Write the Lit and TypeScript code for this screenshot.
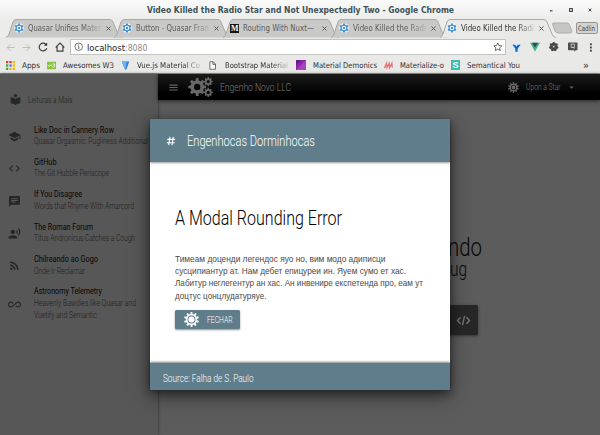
import { LitElement, html, svg, css } from "lit";
import { customElement } from "lit/decorators.js";

/** One line of text fitted to a given width; capitals are centred in the height. */
const line = (text: string, width: number, size: number, height: number, cls = "") => html`
  <svg class="line ${cls}" width=${width} height=${height}>
    <text y=${height / 2 + size * 0.36} font-size=${size} textLength=${width} lengthAdjust="spacingAndGlyphs">${text}</text>
  </svg>`;

const icon = (body: unknown, size: number, cls = "", box = "0 0 24 24") => html`
  <svg class="icon ${cls}" width=${size} height=${size} viewBox=${box}>${body}</svg>`;

/** Outline of a cog wheel with a round hole. */
function cog(cx: number, cy: number, r: number, root: number, teeth: number, hole: number) {
  const step = (Math.PI * 2) / teeth;
  const pts: string[] = [];
  for (let i = 0; i < teeth; i++) {
    for (const [rad, off] of [[root, -0.3], [r, -0.19], [r, 0.19], [root, 0.3]]) {
      const a = (i + off) * step - Math.PI / 2;
      pts.push(`${(cx + rad * Math.cos(a)).toFixed(2)} ${(cy + rad * Math.sin(a)).toFixed(2)}`);
    }
  }
  return `M${pts.join("L")}ZM${cx - hole} ${cy}a${hole} ${hole} 0 1 0 ${hole * 2} 0a${hole} ${hole} 0 1 0 ${-hole * 2} 0Z`;
}

const quasar = () => icon(svg`
  <circle cx="12" cy="12" r="11.5" fill="#f3f8fc"/>
  <path fill-rule="evenodd" fill="#3f8fd6" d=${cog(12, 12, 11, 8.5, 6, 5.5)}/>
  <circle cx="12" cy="12" r="2.6" fill="#1976d2"/>`, 10);
const medium = () => html`<span class="medium">M</span>`;

const tabs = [
  { icon: quasar, title: "Quasar Unifies Mater", width: 73, fade: true },
  { icon: quasar, title: "Button - Quasar Fran", width: 73, fade: true },
  { icon: medium, title: "Routing With Nuxt—", width: 71, fade: false },
  { icon: quasar, title: "Video Killed the Radi", width: 73, fade: true },
  { icon: quasar, title: "Video Killed the Radi", width: 73, fade: true, active: true },
];

const appsIcon = icon(svg`${["#e53935", "#e53935", "#f4b400", "#43a047", "#3f7de0", "#f4b400", "#43a047", "#f4b400", "#f4b400"].map(
  (c, i) => svg`<rect x=${(i % 3) * 9} y=${Math.floor(i / 3) * 9} width="6" height="6" fill=${c}/>`)}`, 9);

const bookmarks = [
  { gap: 6, icon: appsIcon, space: 7, text: "Apps", width: 18 },
  { gap: 7, icon: icon(svg`<rect y="2" width="24" height="20" fill="#86c440"/><path d="M2 10l4 5 4-5 4 5M15 8h6l-3 4c5 0 4 6-3 4" fill="none" stroke="#fff" stroke-width="2"/>`, 9), space: 7, text: "Awesomes W3", width: 51 },
  { gap: 7, icon: icon(svg`<path d="M2 1h20L14 23h-3z" fill="#2f7fd6"/><path d="M2 1h13l-3 22z" fill="#6bb3f2"/>`, 9), space: 7, text: "Vue.js Material Co", width: 63, fade: true },
  { gap: 8, icon: icon(svg`<path d="M5 2h9l6 6v14H5zM13 2v7h7" fill="#fff" stroke="#555" stroke-width="2.2"/>`, 9), space: 8, text: "Bootstrap Material", width: 63, fade: true },
  { gap: 8, icon: icon(svg`<rect width="24" height="24" fill="#8e24aa"/><path d="M0 24L24 0v24z" fill="#a744bd"/><path d="M0 0h14L0 14z" fill="#6d1b94"/>`, 10), space: 7, text: "Material Demonics", width: 64 },
  { gap: 7, icon: icon(svg`<path d="M1 19L7 6l1 12 6-12 1 12 6-12 1 12" fill="none" stroke="#ee6e73" stroke-width="3.4"/>`, 9), space: 7, text: "Materialize-o", width: 44 },
  { gap: 7, icon: html`<span class="semantic">S</span>`, space: 7, text: "Semantical You", width: 53 },
];

const menu = [
  { title: "Like Doc in Cannery Row", width: 80, sub: [["Quasar Orgasmic: Pugliness Additional", 114]], icon: svg`<path d="M5 13.18v4L12 21l7-3.82v-4L12 17l-7-3.82zM12 3L1 9l11 6 9-4.91V17h2V9L12 3z"/>` },
  { title: "GitHub", width: 22.5, sub: [["The Git Hubble Periscope", 75]], icon: svg`<path d="M9.4 16.6L4.8 12l4.6-4.6L8 6l-6 6 6 6 1.4-1.4zm5.2 0l4.6-4.6-4.6-4.6L16 6l6 6-6 6-1.4-1.4z"/>` },
  { title: "If You Disagree", width: 48, sub: [["Words that Rhyme With Amarcord", 100]], icon: svg`<path d="M20 2H4c-1.1 0-1.99.9-1.99 2L2 22l4-4h14c1.1 0 2-.9 2-2V4c0-1.1-.9-2-2-2zM6 9h12v2H6V9zm8 5H6v-2h8v2zm4-6H6V6h12v2z"/>` },
  { title: "The Roman Forum", width: 59, sub: [["Titus Andronicus Catches a Cough", 101]], icon: svg`<circle cx="9" cy="9" r="4"/><path d="M9 15c-2.67 0-8 1.34-8 4v2h16v-2c0-2.66-5.33-4-8-4zm7.76-9.64l-1.68 1.69c.84 1.18.84 2.71 0 3.89l1.68 1.69c2.02-2.02 2.02-5.07 0-7.27zM20.07 2l-1.63 1.63c2.77 3.02 2.77 7.56 0 10.74L20.07 16c3.9-3.89 3.91-9.95 0-14z"/>` },
  { title: "Chilreando ao Gogo", width: 64, sub: [["Onde Ir Reclamar", 51]], icon: svg`<circle cx="6.18" cy="17.82" r="2.18"/><path d="M4 4.44v2.83c7.03 0 12.73 5.7 12.73 12.73h2.83c0-8.59-6.97-15.56-15.56-15.56zm0 5.66v2.83c3.9 0 7.07 3.17 7.07 7.07h2.83c0-5.47-4.43-9.9-9.9-9.9z"/>` },
  { title: "Astronomy Telemetry", width: 68, sub: [["Heavenly Bawdies like Quasar and", 102], ["Vuetify and Semantic", 63]], icon: svg`<path d="M18.6 6.62c-1.44 0-2.8.56-3.77 1.53L12 10.66 10.48 12h.01L7.8 14.39c-.64.64-1.49.99-2.4.99-1.87 0-3.39-1.51-3.39-3.38S3.53 8.62 5.4 8.62c.91 0 1.76.35 2.44 1.03l1.13 1 1.51-1.34L9.22 8.2C8.2 7.18 6.84 6.62 5.4 6.62 2.42 6.62 0 9.04 0 12s2.42 5.38 5.4 5.38c1.44 0 2.8-.56 3.77-1.53l2.83-2.5.01.01L13.52 12h-.01l2.69-2.39c.64-.64 1.49-.99 2.4-.99 1.87 0 3.39 1.51 3.39 3.38s-1.52 3.38-3.39 3.38c-.9 0-1.76-.35-2.44-1.03l-1.14-1.01-1.51 1.34 1.27 1.12c1.02 1.01 2.37 1.57 3.82 1.57 2.98 0 5.4-2.41 5.4-5.38s-2.42-5.37-5.4-5.37z"/>` },
] as const;

@customElement("browser-chrome")
class BrowserChrome extends LitElement {
  static styles = css`
    :host { display: block; height: 74px; background: #e9e9e7; box-sizing: border-box; border-bottom: 1.5px solid #8f8f8c; font-family: "DejaVu Sans", sans-serif; font-weight: 400; }
    svg { display: block; flex: none; overflow: visible; }
    .row { display: flex; align-items: center; }
    .title { height: 19px; background: linear-gradient(#fbfbfb, #ececeb); padding-left: 147px; }
    .title .line { font-weight: bold; fill: #40525a; }
    .win { display: flex; align-items: center; justify-content: space-between; width: 42px; margin-left: 95.5px; color: #333; }
    .win .icon { fill: none; stroke: #3a464c; }
    .tabs { height: 18px; background: #ececeb; padding-left: 6px; position: relative; }
    .tab { position: relative; width: 108.4px; height: 18px; display: flex; align-items: center; flex: none; }
    .tab.active { z-index: 1; width: 112px; }
    .shape { position: absolute; left: 0; top: 0; fill: #c9c9c7; stroke: #a9a9a6; }
    .active .shape { fill: #e9e9e7; }
    .inner { position: relative; display: flex; align-items: center; padding-left: 7.5px; gap: 4px; width: 100%; }
    .inner .line { fill: #5c5c5c; }
    .active .inner .line { fill: #333; }
    .fade { -webkit-mask-image: linear-gradient(90deg, #000 75%, transparent 105%); mask-image: linear-gradient(90deg, #000 75%, transparent 105%); }
    .close { margin-left: auto; margin-right: 3.5px; stroke: #555; stroke-width: 3.2; fill: none; }
    .active .close { margin-right: 8.5px; }
    .medium { background: #151515; color: #fff; width: 9px; height: 9px; font: bold 8px/9px "Liberation Serif", serif; text-align: center; }
    .new { fill: #c6c6c4; stroke: #adadaa; }
    .user { margin-left: 4px; width: 20px; height: 10px; border: 1px solid #979795; border-radius: 2px; background: #d3d3d1; display: flex; align-items: center; justify-content: center; }
    .user .line { fill: #444; }
    .tools { height: 20px; padding-left: 6px; }
    .tools > .nav { margin-right: 7px; fill: none; stroke: #3e3e3e; stroke-width: 2.8; }
    .tools > .dim { stroke: #bdbdbb; stroke-width: 2.6; }
    .url { width: 436px; height: 16px; margin-left: -2px; box-sizing: border-box; border: 1px solid #c2c2bf; background: #fff; display: flex; align-items: center; padding: 0 3px 0 3px; }
    .url .host { fill: #222; margin-left: 3px; }
    .url .port { fill: #8a8a8a; margin-left: .5px; }
    .star { margin-left: auto; }
    .ext { display: flex; align-items: center; gap: 9px; margin-left: 6px; }
    .marks { height: 16px; }
    .mark { display: flex; align-items: center; }
    .mark .line { fill: #303030; }
    .semantic { background: #35bdb2; color: #fff; width: 9px; height: 10px; font: bold 9px/10px "Liberation Sans", sans-serif; text-align: center; }
    .more { margin-left: 63px; fill: #333; }
  `;
  render() {
    return html`
      <div class="row title">
        ${line("Video Killed the Radio Star and Not Unexpectedly Two - Google Chrome", 307, 8, 18)}
        <div class="win">
          ${icon(svg`<path d="M0 2.8h2.5" stroke-width="1.2"/>`, 4, "", "0 0 4 4")}
          ${icon(svg`<rect x=".6" y=".6" width="2.8" height="2.8" stroke-width="1.1"/>`, 4, "", "0 0 4 4")}
          ${icon(svg`<path d="M.6 .6l2.8 2.8M3.4 .6L.6 3.4" stroke-width="1"/>`, 4, "", "0 0 4 4")}
        </div>
      </div>
      <div class="row tabs">
        ${tabs.map((t) => html`
          <div class="tab ${t.active ? "active" : ""}">
            <svg class="shape" width="118" height="18"><path d="M0 18.5Q2 18 3 15L7 3Q8 .5 10 .5H104Q106 .5 107 3L112 15Q113 18 116 18.5"/></svg>
            <div class="inner">
              ${t.icon()}
              ${line(t.title, t.width, 8, 18, t.fade ? "fade" : "")}
              ${icon(svg`<path d="M5 5l14 14M19 5L5 19"/>`, 7, "close")}
            </div>
          </div>`)}
        <svg class="new" width="20" height="12"><path d="M1 1h14q2 0 2.5 2l2.5 6q0 2-2 2H6q-2 0-3-2L.5 2z"/></svg>
        <div class="user">${line("Cadlin", 17, 7.5, 10)}</div>
      </div>
      <div class="row tools">
        ${icon(svg`<path d="M23 12H3M12 3l-9 9 9 9"/>`, 9, "nav dim")}
        ${icon(svg`<path d="M1 12h20M12 3l9 9-9 9"/>`, 9, "nav dim")}
        ${icon(svg`<path d="M20 7A9.3 9.3 0 1 0 21 15"/><path d="M14 9h8V1z" fill="#3e3e3e" stroke="none"/>`, 10, "nav")}
        ${icon(svg`<path d="M1.5 13L12 2.5 22.5 13M5 11v11h14V11"/>`, 10, "nav")}
        <div class="url">
          ${icon(svg`<circle cx="12" cy="12" r="9.5" fill="none" stroke="#555" stroke-width="2"/><path d="M12 10.5v7M12 6v2.5" stroke="#555" stroke-width="2.4"/>`, 9.5)}
          ${line("localhost", 38, 9.3, 13, "host")}${line(":8080", 22.5, 9.3, 13, "port")}
          ${icon(svg`<path d="M12 2.5l3 6.5 7 .8-5.2 4.8 1.4 7L12 18l-6.2 3.6 1.4-7L2 9.8 9 9z" fill="none" stroke="#444" stroke-width="2"/>`, 9.5, "star")}
        </div>
        <div class="ext">
          ${icon(svg`<circle cx="12" cy="12" r="12" fill="#dce9f5"/><path d="M1 4l8 1 3 5 3-5 8-1-8 11v8H9v-8z" fill="#1565c0"/>`, 9)}
          ${icon(svg`<path d="M0 2h24L12 23z" fill="#41b883"/><path d="M5 2h14l-7 12z" fill="#35495e"/>`, 10)}
          ${icon(svg`<path d=${cog(12, 12, 12, 10, 7, 2)} fill="#444" fill-rule="evenodd"/><path d="M4 9l16 0M6 17l4-4M18 17l-4-4" stroke="#777" stroke-width="1.5"/>`, 9.5)}
          ${icon(svg`<rect y="1" width="24" height="20" rx="2" fill="#4c4c4c"/><path d="M15 21h5l-3 3z" fill="#4c4c4c"/><path d="M8 5h8v9H8zM12 12l4 5" fill="none" stroke="#ddd" stroke-width="2"/>`, 9.5)}
          ${icon(svg`<g fill="#444"><rect x="10.5" y="1" width="5" height="5"/><rect x="10.5" y="9.5" width="5" height="5"/><rect x="10.5" y="18" width="5" height="5"/></g>`, 9)}
        </div>
      </div>
      <div class="row marks">
        ${bookmarks.map((b) => html`
          <div class="mark" style="gap:${b.space}px;margin-left:${b.gap}px">
            ${b.icon}${line(b.text, b.width, 7.8, 16, b.fade ? "fade" : "")}
          </div>`)}
        ${line("»", 6, 10, 14, "more")}
      </div>`;
  }
}

@customElement("app-root")
class AppRoot extends LitElement {
  static styles = css`
    :host { display: block; position: relative; width: 600px; height: 435px; overflow: hidden; font-family: Roboto, "Liberation Sans", sans-serif; font-weight: 300; }
    svg { display: block; flex: none; overflow: visible; }
    .page { display: flex; height: 361px; background: #5c5c5c; }
    .side { width: 158px; background: #575757; box-shadow: 0 0 3px rgba(0, 0, 0, .55); }
    .brand { display: flex; align-items: center; gap: 6px; height: 51px; padding-left: 9px; }
    .brand .icon, .item .icon { fill: #262626; }
    .item .icon { margin-top: 3px; }
    .brand .line, .sub { fill: #202020; }
    .item { display: flex; align-items: center; gap: 13px; padding-left: 8px; margin-bottom: 7.4px; }
    .texts { display: flex; flex-direction: column; }
    .name { fill: #060606; font-weight: 400; }
    .list { margin-top: -2.5px; }
    .main { flex: 1; }
    .bar { display: flex; align-items: center; height: 26px; background: linear-gradient(#1b1b1b, #000 75%); box-shadow: 0 1px 4px rgba(0, 0, 0, .6); padding-left: 11px; }
    .bar .icon, .gears { fill: #676767; }
    .gears { margin-left: 10px; }
    .bar .line { fill: #7c7c7c; }
    .org { margin-left: 7px; }
    .sun { margin-left: 217px; }
    .star { margin-left: 6.5px; }
    .caret { margin-left: 9px; }
    .hero { display: flex; flex-direction: column; align-items: flex-end; width: 324px; padding-top: 135px; }
    .hero .line { fill: #080808; }
    .second { margin: 1px 15px 0 0; }
    .code { display: flex; align-items: center; justify-content: flex-end; width: 60px; height: 30px; margin: 27px 4px 0 0; background: #272727; box-shadow: 0 1px 3px #333; border-radius: 2px; box-sizing: border-box; padding-right: 8px; }
    .code .icon { fill: none; stroke: #777; stroke-width: 2.6; }
    .modal { position: absolute; left: 150px; top: 119px; width: 300px; height: 271px; background: #fff; display: flex; flex-direction: column; box-shadow: 0 6px 18px rgba(0, 0, 0, .5), 0 3px 8px rgba(0, 0, 0, .35); }
    .head { display: flex; align-items: center; height: 43px; background: #607d8b; padding-left: 16px; gap: 11px; box-shadow: 0 1px 2px rgba(0, 0, 0, .4); }
    .head .line { fill: #fff; }
    .hash { fill: none; stroke: #fff; stroke-width: 2.6; }
    .body { flex: 1; padding: 46px 25px 0; }
    .h1 { fill: #000; }
    .para { margin: 24.5px 0 8px; fill: #4a4a4a; font-family: "Liberation Sans", sans-serif; font-weight: 400; }
    .btn { display: flex; align-items: center; gap: 8px; width: 65px; height: 19px; box-sizing: border-box; padding: 0 0 0 9px; border: 0; border-radius: 1.5px; background: #607d8b; box-shadow: 0 1px 2px rgba(0, 0, 0, .45); font-family: inherit; font-weight: 300; }
    .btn .icon { fill: #fff; }
    .btn .line { fill: #fff; }
    .foot { display: flex; align-items: center; height: 27px; padding: 2px 0 0 13px; box-sizing: border-box; background: #607d8b; box-shadow: 0 -1px 2px rgba(0, 0, 0, .5); }
    .foot .line { fill: #fff; }
  `;
  render() {
    return html`
      <browser-chrome></browser-chrome>
      <div class="page">
        <nav class="side">
          <div class="brand">
            ${icon(svg`<path d="M12 11.55C9.64 9.35 6.48 8 3 8v11c3.48 0 6.64 1.35 9 3.55 2.36-2.19 5.52-3.55 9-3.55V8c-3.48 0-6.64 1.35-9 3.55zM12 8c1.66 0 3-1.34 3-3s-1.34-3-3-3-3 1.34-3 3 1.34 3 3 3z"/>`, 13)}
            ${line("Leituras a Mais", 44.5, 8.5, 12)}
          </div>
          <div class="list">
            ${menu.map((m) => html`
              <div class="item">
                ${icon(m.icon, 13)}
                <div class="texts">
                  ${line(m.title, m.width, 9.6, 12.6, "name")}
                  ${m.sub.map(([text, width]) => line(text, width, 9, 12.4, "sub"))}
                </div>
              </div>`)}
          </div>
        </nav>
        <main class="main">
          <header class="bar">
            ${icon(svg`<path d="M1 4h22v3H1zM1 10.5h22v3H1zM1 17h22v3H1z"/>`, 9)}
            <svg class="gears" width="25" height="20" fill-rule="evenodd">
              <path d=${cog(9.2, 10, 9, 6.8, 8, 3.2)}/>
              <path d=${cog(20.2, 4.6, 4.6, 3.4, 8, 1.6)}/>
              <path d=${cog(20.2, 15.4, 4.6, 3.4, 8, 1.6)}/>
            </svg>
            ${line("Engenho Novo LLC", 71, 10.8, 25, "org")}
            ${icon(svg`<path fill-rule="evenodd" d=${cog(12, 12, 12, 8.6, 10, 5.6)}/><circle cx="12" cy="12" r="4.2"/>`, 11, "sun")}
            ${line("Upon a Star", 34.5, 8.8, 26, "star")}
            ${icon(svg`<path d="M2 7h20L12 18z"/>`, 5, "caret")}
          </header>
          <div class="hero">
            ${line("ndo", 34, 25, 24, "first")}
            ${line("ug", 17, 20, 18, "second")}
            <div class="code">${icon(svg`<path d="M6.5 6L1 12l5.5 6M17.5 6L23 12l-5.5 6M14 3.5l-4 17"/>`, 13)}</div>
          </div>
        </main>
      </div>
      <section class="modal">
        <header class="head">
          ${icon(svg`<path d="M9.5 2L6.5 22M17.5 2l-3 20M3 8h19M2 16h19"/>`, 10, "hash")}
          ${line("Engenhocas Dorminhocas", 128, 14.4, 45)}
        </header>
        <div class="body">
          ${line("A Modal Rounding Error", 167, 19.5, 20, "h1")}
          <div class="para">
            ${line("Тимеам доценди легендос яуо но, вим модо адиписци", 210.5, 8.4, 12.4)}
            ${line("сусципиантур ат. Нам дебет епицуреи ин. Яуем сумо ет хас.", 231, 8.4, 12.4)}
            ${line("Лабитур неглегентур ан хас. Ан инвенире експетенда про, еам ут", 248, 8.4, 12.4)}
            ${line("доцтус цонцлудатуряуе.", 91.5, 8.4, 12.4)}
          </div>
          <button class="btn">
            ${icon(svg`<path fill-rule="evenodd" d=${cog(12, 12, 12, 9, 10, 6.4)}/><circle cx="12" cy="12" r="4.9"/>`, 15)}
            ${line("FECHAR", 25.5, 8.8, 20)}
          </button>
        </div>
        <footer class="foot">${line("Source: Falha de S. Paulo", 90.5, 10.4, 24)}</footer>
      </section>`;
  }
}
